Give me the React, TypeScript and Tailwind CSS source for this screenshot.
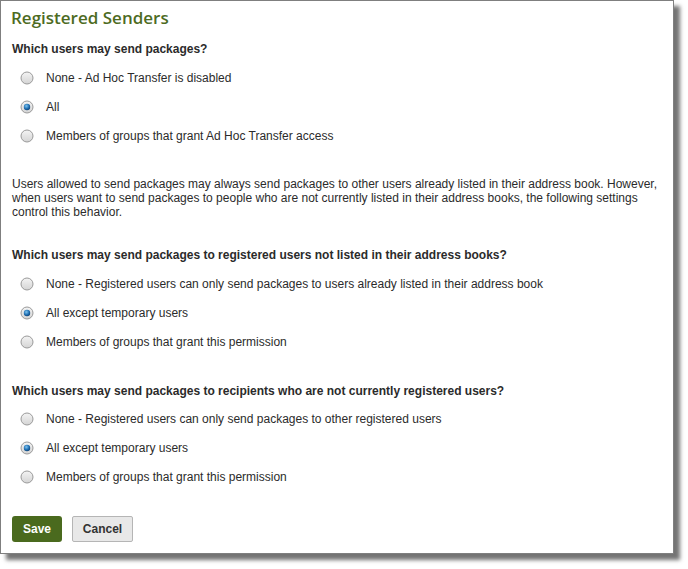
import React from "react";

function Radio({ checked }: { checked?: boolean }) {
  return (
    <svg width="14" height="14" viewBox="0 0 14 14" className="shrink-0">
      <defs>
        <linearGradient id={checked ? "rgc" : "rgu"} x1="0" y1="0" x2="0" y2="1">
          <stop offset="0" stopColor="#f4f4f4" />
          <stop offset="1" stopColor="#d4d4d4" />
        </linearGradient>
        <radialGradient id="dot" cx="0.4" cy="0.35" r="0.7">
          <stop offset="0" stopColor="#7fc4f0" />
          <stop offset="0.6" stopColor="#1f6fb2" />
          <stop offset="1" stopColor="#0e3e70" />
        </radialGradient>
      </defs>
      <circle cx="7" cy="7" r="6" fill={`url(#${checked ? "rgc" : "rgu"})`} stroke="#9a9a9a" strokeWidth="1" />
      {checked && <circle cx="7" cy="7" r="3.2" fill="url(#dot)" />}
    </svg>
  );
}

function Row({ label, checked }: { label: string; checked?: boolean }) {
  return (
    <div className="flex h-[29px] items-center pl-[8px]">
      <Radio checked={checked} />
      <span className="ml-[12px]">{label}</span>
    </div>
  );
}

export default function App() {
  return (
    <div className="w-[688px] h-[569px] bg-white">
      <div
        className="w-[674px] h-[554px] border border-[#7f7f7f] bg-white text-[12px] leading-[14px] text-[#2b2b2b] shadow-[6px_6px_4px_rgba(0,0,0,0.55)]"
        style={{ fontFamily: '"Liberation Sans", Arial, sans-serif' }}
      >
        <div className="pl-[10px] pt-[7px]">
          <h1
            className="text-[17px] leading-[20px] font-semibold text-[#4d6b1f]"
            style={{ fontFamily: '"Open Sans", sans-serif' }}
          >
            Registered Senders
          </h1>
        </div>
        <div className="pl-[11px]">
          <div className="mt-[13px] font-bold leading-[16px]">Which users may send packages?</div>
          <div className="mt-[6px]">
            <Row label="None - Ad Hoc Transfer is disabled" />
            <Row label="All" checked />
            <Row label="Members of groups that grant Ad Hoc Transfer access" />
          </div>
          <p className="mt-[27px] pr-[12px] leading-[14px]">
            Users allowed to send packages may always send packages to other users already listed in their address book. However, when users want to send packages to people who are not currently listed in their address books, the following settings control this behavior.
          </p>
          <div className="mt-[28px] font-bold leading-[16px]">
            Which users may send packages to registered users not listed in their address books?
          </div>
          <div className="mt-[6px]">
            <Row label="None - Registered users can only send packages to users already listed in their address book" />
            <Row label="All except temporary users" checked />
            <Row label="Members of groups that grant this permission" />
          </div>
          <div className="mt-[27px] font-bold leading-[16px]">
            Which users may send packages to recipients who are not currently registered users?
          </div>
          <div className="mt-[5px]">
            <Row label="None - Registered users can only send packages to other registered users" />
            <Row label="All except temporary users" checked />
            <Row label="Members of groups that grant this permission" />
          </div>
          <div className="mt-[25px] flex gap-[10px]">
            <button className="h-[26px] w-[50px] rounded-[3px] bg-[#4a6a1e] text-white font-bold text-[12px]">
              Save
            </button>
            <button className="h-[26px] w-[61px] rounded-[2px] border border-[#b5b5b5] bg-[#e8e8e8] text-[#333] font-bold text-[12px]">
              Cancel
            </button>
          </div>
        </div>
      </div>
    </div>
  );
}
